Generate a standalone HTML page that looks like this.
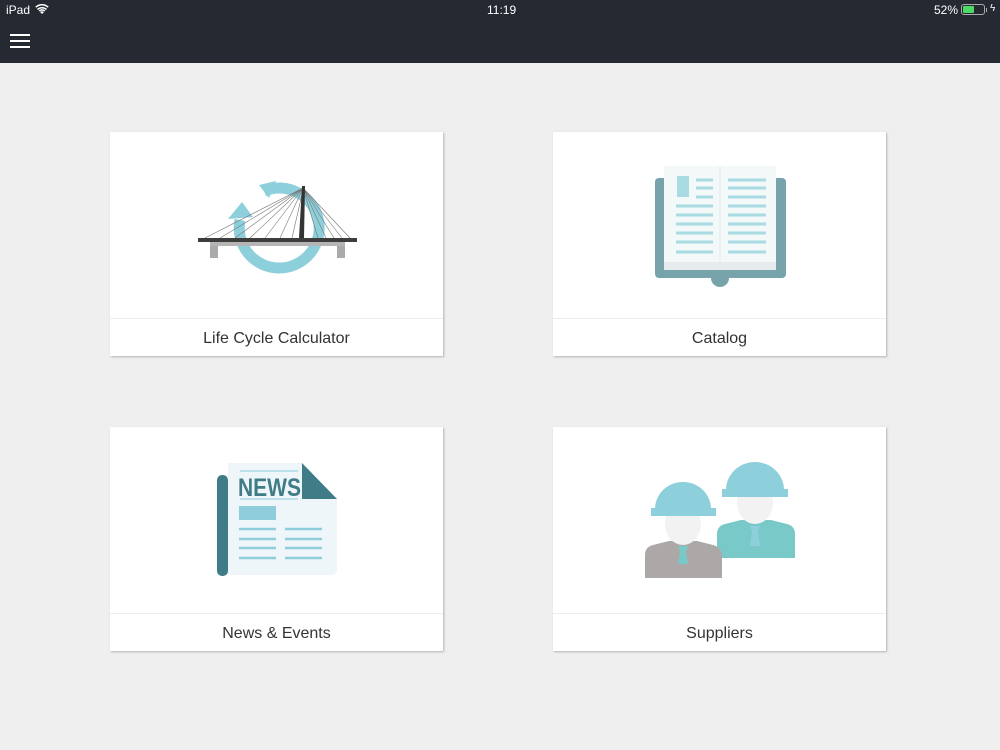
<!DOCTYPE html>
<html><head><meta charset="utf-8"><style>
*{margin:0;padding:0;box-sizing:border-box}
body{width:1000px;height:750px;background:#efefef;font-family:"Liberation Sans",sans-serif;position:relative;overflow:hidden}
.bar{position:absolute;left:0;top:0;width:1000px;height:63px;background:#252932;color:#fff}
.card{position:absolute;width:333px;height:224px;background:#fff;box-shadow:1px 1px 2px rgba(0,0,0,.25)}
.card .div{position:absolute;left:0;right:0;top:186px;border-top:1px solid #ececec}
.card .lbl{position:absolute;left:0;right:0;top:198px;text-align:center;font-size:16px;color:#333}
svg.ov{position:absolute;left:0;top:0}
</style></head><body>
<div class="bar">
<div style="position:absolute;left:6px;top:3px;font-size:12px">iPad</div>
<svg style="position:absolute;left:35px;top:4px" width="14" height="11" viewBox="0 0 14 11"><path d="M7 10L5 8a3 3 0 0 1 4 0z" fill="#fff"/><path d="M2.5 5.5a6.5 6.5 0 0 1 9 0M0.8 3.2a9 9 0 0 1 12.4 0M4.2 7a4 4 0 0 1 5.6 0" stroke="#fff" stroke-width="1.5" fill="none"/></svg>
<div style="position:absolute;left:487px;top:3px;font-size:12px">11:19</div>
<div style="position:absolute;left:934px;top:3px;font-size:12px">52%</div>
<div style="position:absolute;left:961px;top:4px;width:24px;height:11px;border:1px solid #aaa;border-radius:3px"><div style="position:absolute;left:1px;top:1px;width:11px;height:7px;background:#4cd964;border-radius:1px"></div></div>
<div style="position:absolute;left:986px;top:8px;width:1px;height:4px;background:#aaa"></div>
<div style="position:absolute;left:990px;top:3px;font-size:10px">ϟ</div>
<div style="position:absolute;left:10px;top:34px;width:20px;height:2px;background:#fff"></div>
<div style="position:absolute;left:10px;top:40px;width:20px;height:2px;background:#fff"></div>
<div style="position:absolute;left:10px;top:46px;width:20px;height:2px;background:#fff"></div>
</div>
<div class="card" style="left:110px;top:132px"><div class="div"></div><div class="lbl">Life Cycle Calculator</div></div>
<div class="card" style="left:553px;top:132px"><div class="div"></div><div class="lbl">Catalog</div></div>
<div class="card" style="left:110px;top:427px"><div class="div"></div><div class="lbl">News &amp; Events</div></div>
<div class="card" style="left:553px;top:427px"><div class="div"></div><div class="lbl">Suppliers</div></div>
<svg class="ov" width="1000" height="750">
<!-- bridge -->
<path d="M264 191A40 40 0 1 1 240 220" stroke="#8ecfdc" stroke-width="11" fill="none"/>
<path d="M228 219L242 202L253 217z" fill="#8ecfdc"/>
<path d="M259 185L276 181L269 198z" fill="#8ecfdc"/>
<g stroke="#777" stroke-width="0.6">
<path d="M303 188L205 238M303 188L220 238M303 188L235 238M303 188L250 238M303 188L265 238M303 188L280 238M303 190L292 238M303 188L350 238M303 188L342 238M303 188L334 238M303 188L326 238M303 188L318 238"/></g>
<path d="M299 238L302 186L305 186L304 238z" fill="#333"/>
<rect x="210" y="242" width="8" height="16" fill="#aaa"/><rect x="337" y="242" width="8" height="16" fill="#aaa"/>
<rect x="210" y="242" width="135" height="4" fill="#b5b5b5"/>
<rect x="198" y="238" width="159" height="4" fill="#3d3d3d"/>
<!-- catalog -->
<rect x="655" y="178" width="131" height="100" rx="4" fill="#77a3ab"/>
<circle cx="720" cy="278" r="9" fill="#77a3ab"/>
<rect x="664" y="166" width="112" height="104" fill="#f3f8f9"/>
<rect x="664" y="262" width="112" height="8" fill="#e6ebee"/>
<line x1="720" y1="166" x2="720" y2="270" stroke="#e3eaed"/>
<rect x="677" y="176" width="12" height="21" fill="#a9dbe3"/>
<g stroke="#a9dbe3" stroke-width="3">
<path d="M696 180h17M696 188h17M696 197h17M676 206h37M676 215h37M676 224h37M676 233h37M676 242h37M676 252h37"/>
<path d="M728 180h38M728 188h38M728 197h38M728 206h38M728 215h38M728 224h38M728 233h38M728 242h38M728 252h38"/>
</g>
<!-- news -->
<rect x="217" y="475" width="11" height="101" rx="5" fill="#3f7c87"/>
<path d="M228 463H302L337 499V570a5 5 0 0 1-5 5H228z" fill="#eef6f9"/>
<path d="M302 463L337 499H302z" fill="#3f7c87"/>
<text transform="translate(238 496) scale(0.84 1)" font-family="Liberation Sans,sans-serif" font-weight="bold" font-size="25" fill="#3f7c87">NEWS</text>
<g stroke="#a9dbe3" stroke-width="1.5"><path d="M240 471h58M240 499h58"/></g>
<rect x="239" y="506" width="37" height="14" fill="#90cddb"/>
<g stroke="#90cddb" stroke-width="2.5"><path d="M239 529h37M239 539h37M239 548h37M239 558h37M285 529h37M285 539h37M285 548h37M285 558h37"/></g>
<!-- suppliers -->
<path d="M717 558V534q0-8 8-10l16-4h30l16 4q8 2 8 10v24z" fill="#79c9c8"/>
<ellipse cx="755" cy="503" rx="18" ry="21" fill="#f2f2f2"/>
<path d="M750 526h10l-2 6 2 14h-10l2-14z" fill="#8ecfdc"/>
<path d="M726 490a29 28 0 0 1 58 0z" fill="#8ecfdc"/>
<rect x="722" y="489" width="66" height="8" fill="#8ecfdc"/>
<path d="M645 578V555q0-8 8-10l16-4h28l16 4q8 2 9 10v23z" fill="#aba8a7"/>
<ellipse cx="683" cy="524" rx="18" ry="21" fill="#f2f2f2"/>
<path d="M678 546h10l-2 6 2 12h-10l2-12z" fill="#79c9c8"/>
<path d="M655 509a28 27 0 0 1 56 0z" fill="#8ecfdc"/>
<rect x="651" y="508" width="65" height="8" fill="#8ecfdc"/>
</svg>
</body></html>
